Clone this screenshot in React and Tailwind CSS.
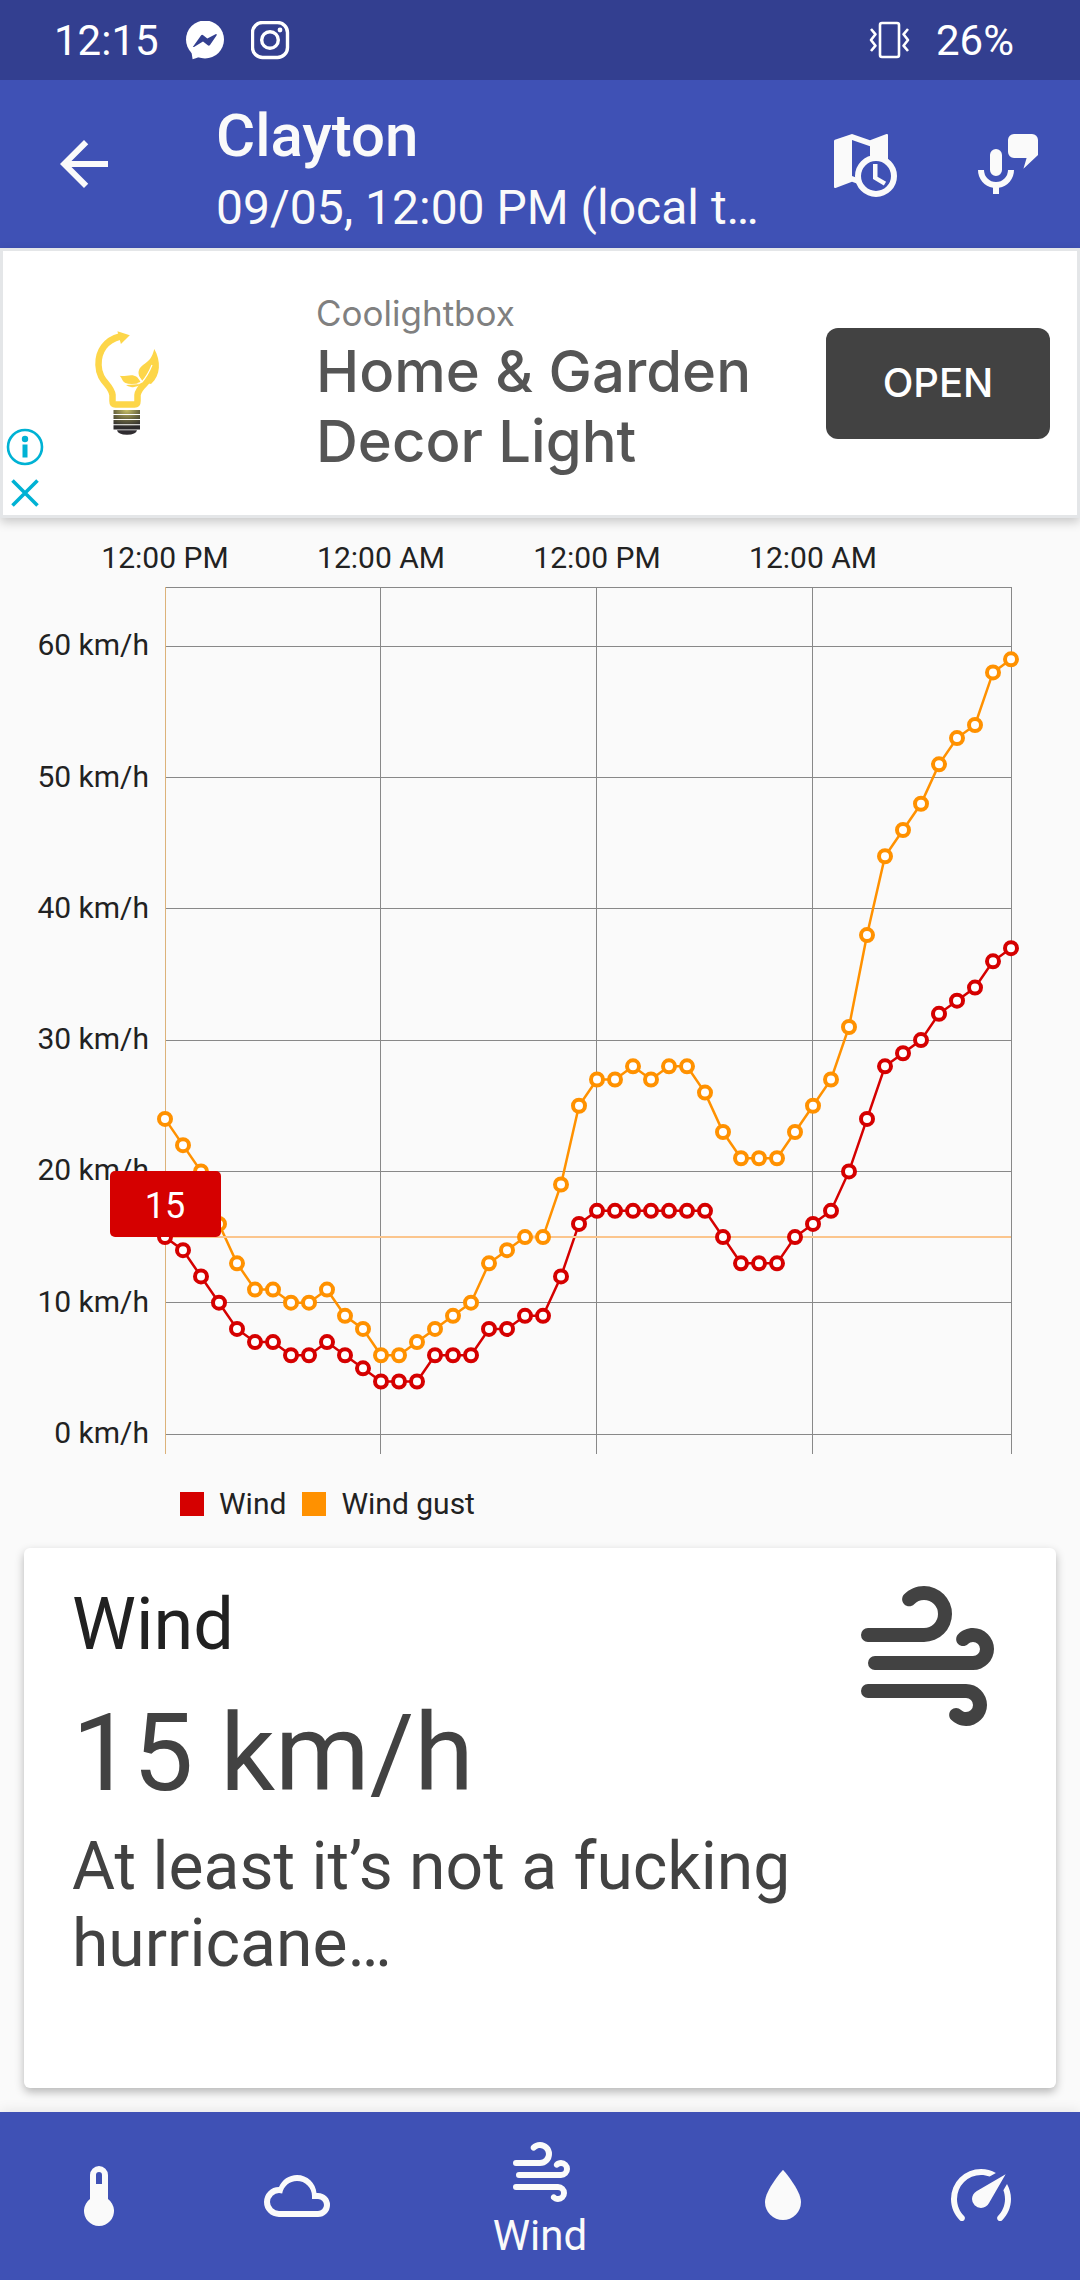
const WIND = [
  15, 14, 12, 10, 8, 7, 7, 6, 6, 7, 6, 5, 4, 4, 4, 6, 6, 6, 8, 8, 9, 9, 12, 16,
  17, 17, 17, 17, 17, 17, 17, 15, 13, 13, 13, 15, 16, 17, 20, 24, 28, 29, 30, 32, 33, 34, 36, 37,
];
const GUST = [
  24, 22, 20, 16, 13, 11, 11, 10, 10, 11, 9, 8, 6, 6, 7, 8, 9, 10, 13, 14, 15, 15, 19, 25,
  27, 27, 28, 27, 28, 28, 26, 23, 21, 21, 21, 23, 25, 27, 31, 38, 44, 46, 48, 51, 53, 54, 58, 59,
];

const PLOT = { left: 165, right: 1011, top: 69, bottom: 936, zero: 916, perUnit: 13.13 };
const xAt = (i) => PLOT.left + i * 18;
const yAt = (v) => PLOT.zero - v * PLOT.perUnit;

const ICONS = {
  thermometer:
    "M15 13V5A3 3 0 0 0 9 5V13A5 5 0 1 0 15 13M12 4A1 1 0 0 1 13 5V8H11V5A1 1 0 0 1 12 4Z",
  cloud:
    "M6,19A5,5 0 0,1 1,14A5,5 0 0,1 6,9C7,6.65 9.3,5 12,5C15.43,5 18.24,7.66 18.5,11.03L19,11A4,4 0 0,1 23,15A4,4 0 0,1 19,19H6M19,13H17V12A5,5 0 0,0 12,7C9.5,7 7.45,8.82 7.06,11.19C6.73,11.07 6.37,11 6,11A3,3 0 0,0 3,14A3,3 0 0,0 6,17H19A2,2 0 0,0 21,15A2,2 0 0,0 19,13Z",
  wind:
    "M4,10A1,1 0 0,1 3,9A1,1 0 0,1 4,8H12A2,2 0 0,0 14,6A2,2 0 0,0 12,4C11.45,4 10.95,4.22 10.59,4.59C10.2,5 9.56,5 9.17,4.59C8.78,4.2 8.78,3.56 9.17,3.17C9.9,2.45 10.9,2 12,2A4,4 0 0,1 16,6A4,4 0 0,1 12,10H4M19,12A1,1 0 0,0 20,11A1,1 0 0,0 19,10C18.72,10 18.47,10.11 18.29,10.29C17.9,10.68 17.27,10.68 16.88,10.29C16.5,9.9 16.5,9.27 16.88,8.88C17.42,8.34 18.17,8 19,8A3,3 0 0,1 22,11A3,3 0 0,1 19,14H5A1,1 0 0,1 4,13A1,1 0 0,1 5,12H19M18,18H4A1,1 0 0,1 3,17A1,1 0 0,1 4,16H18A3,3 0 0,1 21,19A3,3 0 0,1 18,22C17.17,22 16.42,21.66 15.88,21.12C15.5,20.73 15.5,20.1 15.88,19.71C16.27,19.32 16.9,19.32 17.29,19.71C17.47,19.89 17.72,20 18,20A1,1 0 0,0 19,19A1,1 0 0,0 18,18Z",
  water: "M12,20A6,6 0 0,1 6,14C6,10 12,3.25 12,3.25C12,3.25 18,10 18,14A6,6 0 0,1 12,20Z",
  speedometer:
    "M12,16A3,3 0 0,1 9,13C9,11.88 9.61,10.9 10.5,10.39L20.21,4.77L14.68,14.35C14.18,15.33 13.17,16 12,16M12,3C13.81,3 15.5,3.5 16.97,4.32L14.87,5.53C14,5.19 13,5 12,5A8,8 0 0,0 4,13C4,15.21 4.89,17.21 6.34,18.65H6.35C6.74,19.04 6.74,19.67 6.35,20.06C5.96,20.45 5.32,20.45 4.93,20.07C3.12,18.26 2,15.76 2,13A10,10 0 0,1 12,3M22,13C22,15.76 20.88,18.26 19.07,20.07C18.68,20.45 18.05,20.45 17.66,20.06C17.27,19.67 17.27,19.04 17.66,18.65C19.11,17.2 20,15.21 20,13C20,12 19.81,11 19.46,10.1L20.67,8C21.5,9.5 22,11.18 22,13Z",
  back: "M20 11H7.83l5.59-5.59L12 4l-8 8 8 8 1.41-1.41L7.83 13H20v-2z",
  microphone:
    "M14 2H20A2 2 0 0 1 22 4V9L17.15 13.6L18.2 10H14A2 2 0 0 1 12 8V4A2 2 0 0 1 14 2ZM8 7A2 2 0 0 1 10 9V14A2 2 0 0 1 6 14V9A2 2 0 0 1 8 7ZM2 14H4A4 4 0 0 0 12 14H14A6 6 0 0 1 9 19.92V22H7V19.92A6 6 0 0 1 2 14Z",
};

function Icon({ name, className }) {
  return (
    <svg viewBox="0 0 24 24" fill="currentColor" aria-hidden="true" className={className}>
      <path d={ICONS[name]} />
    </svg>
  );
}

function StatusBar() {
  return (
    <div className="flex h-20 items-center justify-between bg-[#333f90] pl-[54px] pr-[66px] pt-0.5 text-[42px] leading-[50px] text-white">
      <div className="flex items-center gap-[26px]">
        <span>12:15</span>
        <svg viewBox="0 0 40 40" className="size-10" aria-label="Messenger">
          <circle cx="20" cy="18.5" r="19" fill="white" />
          <path d="M6 28L7.6 38.3Q11 37 13.500 36.200L20 36Z" fill="white" />
          <path d="M7.8 26L16 14.500Q17 13.300 18.200 14.300L22.300 17.500L31 13Q32.500 13 31.500 14.500L25 24Q24 25.300 22.800 24.300L18 20.500L9 26Z" fill="#333f90" />
        </svg>
        <svg viewBox="0 0 40 40" className="size-10" aria-label="Instagram" fill="none" stroke="white">
          <rect x="1.500" y="1.500" width="35" height="35" rx="10" strokeWidth="3.400" />
          <circle cx="19" cy="19" r="8.300" strokeWidth="3.400" />
          <circle cx="29" cy="9" r="2.400" fill="white" stroke="none" />
        </svg>
      </div>
      <div className="flex items-center gap-6">
        <svg viewBox="0 0 44 40" className="h-10 w-11" aria-label="Vibrate" fill="none" stroke="white" strokeWidth="2.600">
          <rect x="12" y="2" width="19" height="34" rx="2" />
          <path d="M3 8L7.500 13.300L3 19L7.500 24.700L3 30M40 8L35.500 13.300L40 19L35.500 24.700L40 30" strokeLinejoin="round" />
        </svg>
        <span>26%</span>
      </div>
    </div>
  );
}

function AppBar() {
  return (
    <header className="flex items-center bg-[#3f51b5] pl-12 pr-9 text-[#fafafa]">
      <button type="button" aria-label="Back">
        <Icon name="back" className="size-[72px]" />
      </button>
      <div className="ml-24 flex-1 whitespace-nowrap pb-1 pt-5">
        <h1 className="text-[60px] font-medium leading-[72px]">Clayton</h1>
        <p className="text-[48px] leading-[72px]">09/05, 12:00 PM (local t…</p>
      </div>
      <div className="flex gap-[72px]">
        <button type="button" aria-label="Choose time">
          <svg viewBox="0 0 24 24" fill="currentColor" aria-hidden="true" className="size-[72px]">
            <path d="M2 4.400Q2 4.050 2.300 3.940L8 2L14 4.100L19.500 2A.4 .4 0 0 1 20 2.400V11L14 12V6.100L8 4V16L10.500 16.900V18.800L8 17.900L2.500 20A.4 .4 0 0 1 2 19.600Z" />
            <circle cx="16" cy="16" r="6" fill="#3f51b5" stroke="currentColor" strokeWidth="2" />
            <path d="M15 12H16.500V16.250L19.360 17.940L18.610 19.160L15 17V12Z" />
          </svg>
        </button>
        <button type="button" aria-label="Speak forecast">
          <Icon name="microphone" className="size-[72px]" />
        </button>
      </div>
    </header>
  );
}

function BulbLogo() {
  return (
    <svg viewBox="0 0 74 112" className="ml-[39px] h-28 w-[74px]" aria-label="Coolightbox logo">
      <defs>
        <radialGradient id="base" cx="0.5" cy="0" r="0.9">
          <stop offset="0" stopColor="#c9c168" />
          <stop offset="0.55" stopColor="#68643f" />
          <stop offset="1" stopColor="#2c2a2c" />
        </radialGradient>
      </defs>
      <path
        d="M30 9.500C16 13 8 24 8.500 38C9 55 21 57 22.500 68V74Q22.500 77.500 25.500 77.500H44.500Q47.500 77.500 47.500 74V68C48.500 59 60 55 64 44"
        fill="none" stroke="#fdd649" strokeWidth="6.500"
      />
      <path d="M27.400 4.200L39.800 8.300L30.900 17Z" fill="#fdd649" />
      <path d="M64.300 22C71 34 71 48 61 57L53 55L50 51C47 45 49 41 53 38C59 34 62 31 64.300 22Z" fill="#fdd649" />
      <path d="M29.800 48.700C35 50 42 46 47 50Q49 52 51 56Q40 58 35.500 56C32 54 32 51 29.800 48.700Z" fill="#fdd649" />
      <path d="M36 58Q44 57.500 52 57Q46 61 41 60Q38 59.500 36 58Z" fill="#fdd649" />
      <path d="M62 38Q58 48 52 55L47.500 56.500M49 50L52 54.500" fill="none" stroke="white" strokeWidth="1.200" />
      <path d="M23.500 83H50V87H23.500ZM23.500 88H50V92H23.500ZM23.500 93H50V97.200H23.500ZM23.500 98.200H50V102.500H23.500Z" fill="url(#base)" />
      <path d="M27 103.300H47Q46 107.700 37 107.700T27 103.300Z" fill="#2f2c30" />
    </svg>
  );
}

function AdBanner() {
  return (
    <section
      aria-label="Advertisement"
      className="relative flex h-[270px] items-center border-[3px] border-[#e4e6e8] bg-white pr-[27px] font-['Inter',sans-serif] shadow-[0_4px_10px_rgba(0,0,0,0.2)]"
    >
      <div className="flex w-12 flex-col items-center gap-2 self-end pb-1 pr-1 text-[#00b2d4]">
        <button type="button" aria-label="Ad information">
          <svg viewBox="0 0 40 40" className="size-10" fill="currentColor">
            <circle cx="20" cy="20" r="17" fill="none" stroke="currentColor" strokeWidth="2.600" />
            <circle cx="20" cy="12" r="3.200" />
            <rect x="17.500" y="17.500" width="5" height="13" />
          </svg>
        </button>
        <button type="button" aria-label="Close ad">
          <svg viewBox="0 0 36 36" className="size-9" fill="none" stroke="currentColor" strokeWidth="3.600">
            <path d="M5.500 5.500L30.500 30.500M30.500 5.500L5.500 30.500" />
          </svg>
        </button>
      </div>
      <BulbLogo />
      <div className="ml-[152px] flex-1">
        <p className="text-[35px] leading-[46px] text-[#808080]">Coolightbox</p>
        <p className="whitespace-nowrap text-[58px] font-medium leading-[70px] text-[#555555]">
          Home &amp; Garden
          <br />
          Decor Light
        </p>
      </div>
      <button type="button" className="h-[111px] w-56 rounded-xl bg-[#424242] text-[40px] font-medium text-white">
        OPEN
      </button>
    </section>
  );
}

function Series({ values, color }) {
  return (
    <polyline
      points={values.map((v, i) => `${xAt(i)},${yAt(v)}`).join(" ")}
      fill="none" stroke={color} strokeWidth="2.500"
    />
  );
}

function Dots({ values, color }) {
  return values.map((v, i) => (
    <circle key={i} cx={xAt(i)} cy={yAt(v)} r="6" fill="white" stroke={color} strokeWidth="4" />
  ));
}

function WindChart() {
  const times = ["12:00 PM", "12:00 AM", "12:00 PM", "12:00 AM"];
  return (
    <svg viewBox="0 0 1080 940" className="w-full" role="img" aria-label="Wind forecast chart">
      <g fill="#222222" fontSize="30">
        {times.map((t, i) => (
          <text key={i} x={xAt(i * 12)} y="50" textAnchor="middle">{t}</text>
        ))}
        {[0, 10, 20, 30, 40, 50, 60].map((v) => (
          <text key={v} x="149" y={yAt(v) + 9} textAnchor="end">{v} km/h</text>
        ))}
      </g>
      <g stroke="#888888" strokeWidth="1" shapeRendering="crispEdges">
        <line x1={PLOT.left} x2={PLOT.right} y1={PLOT.top} y2={PLOT.top} />
        {[0, 10, 20, 30, 40, 50, 60].map((v) => (
          <line key={v} x1={PLOT.left} x2={PLOT.right} y1={yAt(v)} y2={yAt(v)} />
        ))}
        {[12, 24, 36].map((i) => (
          <line key={i} x1={xAt(i) - 1} x2={xAt(i) - 1} y1={PLOT.top} y2={PLOT.bottom} />
        ))}
        <line x1={PLOT.right} x2={PLOT.right} y1={PLOT.top} y2={PLOT.bottom} />
        <line x1={PLOT.left} x2={PLOT.left} y1={PLOT.top} y2={PLOT.bottom} stroke="#dcb27a" />
      </g>
      <Series values={WIND} color="#d50000" />
      <Series values={GUST} color="#ff9100" />
      <line x1={PLOT.left} x2={PLOT.right} y1={yAt(15)} y2={yAt(15)} stroke="#fbc58d" strokeWidth="2" />
      <Dots values={WIND} color="#d50000" />
      <Dots values={GUST} color="#ff9100" />
      <rect x="110" y="653" width="111" height="66" rx="5" fill="#d50000" />
      <text x="165" y="700" fill="white" fontSize="36" textAnchor="middle">15</text>
    </svg>
  );
}

function Legend() {
  return (
    <ul className="mt-7 flex items-center gap-4 pl-[180px] text-[30px] leading-9 text-[#222222]">
      <li className="flex items-center gap-[15px]">
        <span className="size-6 bg-[#d50000]" />
        Wind
      </li>
      <li className="flex items-center gap-[15px]">
        <span className="size-6 bg-[#ff9100]" />
        Wind gust
      </li>
    </ul>
  );
}

function WindCard() {
  return (
    <section className="mx-6 mb-6 mt-[26px] flex flex-1 items-start justify-between rounded-md bg-white pb-12 pl-12 pr-12 pt-6 shadow-[0_4px_10px_rgba(0,0,0,0.28)]">
      <div className="pt-2">
        <h2 className="text-[72px] leading-[90px] text-[#212121]">Wind</h2>
        <p className="mt-2 text-[108px] leading-[150px] text-[#424242]">15 km/h</p>
        <p className="text-[66px] leading-[77px] text-[#424242]">
          At least it’s not a fucking
          <br />
          hurricane…
        </p>
      </div>
      <Icon name="wind" className="size-[168px] shrink-0 text-[#424242]" />
    </section>
  );
}

function BottomNav() {
  return (
    <nav className="flex h-[168px] bg-[#3f51b5] text-[#fafafa] shadow-[0_-2px_12px_rgba(0,0,0,0.08)]">
      <button type="button" aria-label="Temperature" className="flex flex-[11] items-center justify-center">
        <Icon name="thermometer" className="size-[72px]" />
      </button>
      <button type="button" aria-label="Clouds" className="flex flex-[11] items-center justify-center">
        <Icon name="cloud" className="size-[72px]" />
      </button>
      <button type="button" aria-current="page" className="flex flex-[16] flex-col items-center pt-6">
        <Icon name="wind" className="size-[72px]" />
        <span className="text-[42px] leading-[56px]">Wind</span>
      </button>
      <button type="button" aria-label="Precipitation" className="flex flex-[11] items-center justify-center">
        <Icon name="water" className="size-[72px]" />
      </button>
      <button type="button" aria-label="Pressure" className="flex flex-[11] items-center justify-center">
        <Icon name="speedometer" className="size-[72px]" />
      </button>
    </nav>
  );
}

export default function App() {
  return (
    <div className="flex min-h-screen flex-col bg-[#fafafa] font-['Roboto',sans-serif]">
      <StatusBar />
      <AppBar />
      <main className="flex flex-1 flex-col">
        <AdBanner />
        <WindChart />
        <Legend />
        <WindCard />
      </main>
      <BottomNav />
    </div>
  );
}
